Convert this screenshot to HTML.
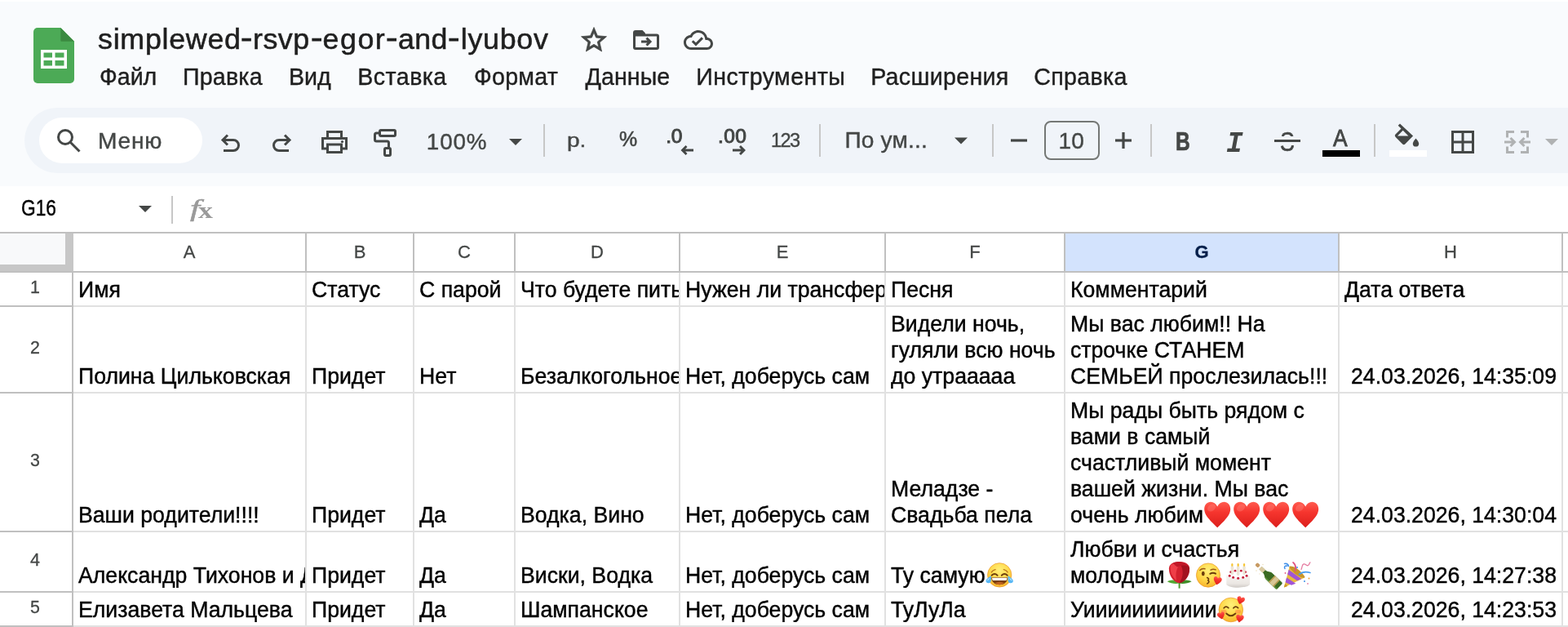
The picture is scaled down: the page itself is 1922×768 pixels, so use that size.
<!DOCTYPE html>
<html lang="ru">
<head>
<meta charset="utf-8">
<title>simplewed-rsvp-egor-and-lyubov</title>
<style>
html,body{margin:0;padding:0;overflow:hidden}
body{width:1922px;height:768px;overflow:hidden;position:relative;background:#fff;font-family:"Liberation Sans",sans-serif;-webkit-font-smoothing:antialiased}
.app{position:absolute;left:0;top:0;width:1922px;height:768px;overflow:hidden;will-change:transform}
.top{position:absolute;left:0;top:2px;width:1922px;height:226px;background:#f9fbfd}
.pill{position:absolute;left:30px;top:132px;width:1960px;height:80px;border-radius:40px;background:#f0f4f9}
.search{position:absolute;left:48px;top:144px;width:200px;height:56px;border-radius:28px;background:#fff}
.fsize{position:absolute;left:1280px;top:148px;width:64px;height:44px;border:2px solid #747775;border-radius:8px}
.ico{position:absolute;left:0;top:0}
.sgap{position:absolute;left:1565px;top:167px;width:26px;height:10.600px;background:#f0f4f9}
.sbar{position:absolute;left:1562px;top:170.600px;width:32px;height:3.400px;background:#444746}
.titlebox{position:absolute;white-space:nowrap;color:#1f1f1f;-webkit-text-stroke:.55px #1f1f1f}
.titlebox .hy{display:inline-block;position:relative;top:-2.500px;transform-origin:0 50%;-webkit-text-stroke-width:.9px}
.t{position:absolute;white-space:pre;-webkit-text-stroke:.4px currentColor}
.fx{position:absolute;left:0;top:0;font-family:"Liberation Serif",serif;color:#9a9a9a;white-space:nowrap}
.fx span{display:inline-block;position:relative;line-height:40px;transform-origin:0 0;vertical-align:top}
.fx .f{left:233px;top:235px;font-size:30px;font-style:italic;transform:scaleX(1.45);-webkit-text-stroke:.5px #9a9a9a}
.fx .fxx{left:234.660px;top:238px;font-size:27.500px;font-weight:700;transform:scaleX(1.3)}
.grid{position:absolute;left:0;top:0;width:1922px;height:768px}
.hdr-bg{position:absolute;left:0;top:286px;width:1922px;height:46px;background:#fff}
.corner{position:absolute;left:0;top:286px;width:80px;height:38px;background:#f8f9fa}
.corner-r{position:absolute;left:80px;top:286px;width:10px;height:48px;background:#c7c7c7}
.corner-b{position:absolute;left:0;top:324px;width:90px;height:10px;background:#c7c7c7}
.sel{position:absolute;background:#d3e3fd}
.vl{position:absolute;top:334px;width:2px;height:434px;background:#e1e1e1}
.hl{position:absolute;left:90px;width:1832px;height:2px;background:#e1e1e1}
.hline{position:absolute;height:2px;background:#c0c0c0}
.hv{position:absolute;top:286px;width:2px;height:46px;background:#c0c0c0}
.rv{position:absolute;left:88px;top:334px;width:2px;height:434px;background:#c0c0c0}
.rh{position:absolute;left:0;width:88px;height:2px;background:#c0c0c0}
.ch{position:absolute;top:286px;height:46px;line-height:46px;text-align:center;font-size:22px;color:#444746;-webkit-text-stroke:.3px currentColor}
.sel-l{font-weight:700;color:#041e49}
.rn{position:absolute;left:0;width:86px;text-align:center;font-size:21.400px;color:#444746;-webkit-text-stroke:.3px currentColor}
.c{position:absolute;overflow:hidden;font-size:26.667px;line-height:32px;color:#000;white-space:nowrap;-webkit-text-stroke:.42px #000}
.c .x{position:absolute;left:6px;bottom:3px;line-height:31px;transform:scaleY(1.03226);transform-origin:0 100%}
.c.r .x{left:auto;right:6px}
.e{display:inline-block;position:relative;width:36px;height:0;vertical-align:baseline}
.e svg{position:absolute;left:0;top:-25px;height:34.875px}
</style>
</head>
<body>
<div class="app">
<div class="top"></div>
<div class="pill"></div>
<div class="search"></div>
<div class="fsize"></div>

<svg class="ico" width="1922" height="230" viewBox="0 0 1922 230" aria-hidden="true">
 <defs>
  <linearGradient id="gh" x1="0" y1="0" x2="0" y2="1"><stop offset="0" stop-color="#ff5c50"/><stop offset=".4" stop-color="#f6352e"/><stop offset="1" stop-color="#dc1f1c"/></linearGradient>
  <radialGradient id="gf" cx=".5" cy=".3" r=".8"><stop offset="0" stop-color="#fff07a"/><stop offset=".5" stop-color="#ffd84a"/><stop offset=".85" stop-color="#f9b72e"/><stop offset="1" stop-color="#ef9a22"/></radialGradient>
  <linearGradient id="gc" x1="0" y1="0" x2="0" y2="1"><stop offset="0" stop-color="#f7f4f1"/><stop offset=".7" stop-color="#ebe7e3"/><stop offset="1" stop-color="#cfcac6"/></linearGradient>
 </defs>
 <!-- sheets logo -->
 <path d="M46 34h28.300L91 50.700V97a5 5 0 0 1-5 5H46a5 5 0 0 1-5-5V39a5 5 0 0 1 5-5z" fill="#4caa56"/>
 <path d="M74.300 34L91 50.700H75.300a1 1 0 0 1-1-1z" fill="#3b8a40"/>
 <path d="M50 61h32v23H50zM53.500 64.500v6H64v-6zM67.500 64.500v6H78.500v-6zM53.500 74v6.500H64V74zM67.500 74v6.500H78.500V74z" fill="#fff" fill-rule="evenodd"/>
 <!-- star -->
 <path transform="translate(709.4 30.4) scale(1.55)" d="M22 9.240l-7.190-.620L12 2 9.190 8.630 2 9.240l5.460 4.730L5.820 21 12 17.270 18.180 21l-1.630-7.030L22 9.240zM12 15.400l-3.760 2.270 1-4.280-3.320-2.880 4.380-.380L12 6.100l1.710 4.040 4.380.380-3.320 2.880 1 4.280L12 15.400z" fill="#444746" stroke="#444746" stroke-width=".5"/>
 <!-- move to folder -->
 <path d="M777.500 41.500v16.500a1.500 1.500 0 0 0 1.500 1.500h26a1.500 1.500 0 0 0 1.500-1.500V44.500a1.500 1.500 0 0 0-1.500-1.500H777.500" fill="none" stroke="#444746" stroke-width="3"/>
 <path d="M776 43v-3a3 3 0 0 1 3-3h8.500l3.500 3.500V43z" fill="#444746"/>
 <path d="M786 51h10M792.500 46.500l4.500 4.500-4.500 4.500" fill="none" stroke="#444746" stroke-width="3"/>
 <!-- cloud done -->
 <path transform="translate(838 31) scale(1.5)" d="M19.350 10.040C18.670 6.590 15.640 4 12 4 9.110 4 6.600 5.640 5.350 8.040 2.340 8.360 0 10.910 0 14c0 3.310 2.690 6 6 6h13c2.760 0 5-2.240 5-5 0-2.640-2.050-4.780-4.650-4.960zM19 18H6c-2.210 0-4-1.790-4-4 0-2.050 1.530-3.760 3.560-3.970l1.070-.110.500-.950C8.080 7.140 9.940 6 12 6c2.620 0 4.880 1.860 5.390 4.430l.300 1.500 1.530.110c1.560.100 2.780 1.410 2.780 2.960 0 1.650-1.350 3-3 3zm-9-3.820l-2.090-2.090L6.500 13.500 10 17l6.010-6.010-1.410-1.410z" fill="#444746"/>
 <!-- toolbar pill -->
</svg>

<svg class="ico" style="top:0" width="1922" height="284" viewBox="0 0 1922 284" aria-hidden="true">
 <g fill="none" stroke="#444746" stroke-width="3">
  <!-- search -->
  <circle cx="80" cy="168" r="8.500"/><path d="M86 174l11.500 11.500"/>
  <!-- undo -->
  <path d="M274 184.500h12a6.500 6.500 0 0 0 0-13h-13"/><path d="M279 177.500l-6-6 6-6"/>
  <!-- redo -->
  <path d="M354 184.500h-12a6.500 6.500 0 0 1 0-13h13"/><path d="M349 177.500l6-6-6-6"/>
  <!-- print -->
  <path d="M401.500 169.500v-8h17v8"/><path d="M401.500 182h-6v-12.500h29V182h-6"/><path d="M401.500 177h17v9.500h-17z"/>
  <!-- paint format -->
  <rect x="465.500" y="159.500" width="19" height="7" rx="1.500"/><path d="M465.500 163h-4a2 2 0 0 0-2 2v6a2 2 0 0 0 2 2h13a2 2 0 0 1 2 2v6"/><rect x="471.500" y="181.500" width="7" height="9" rx="1.500"/>
  <!-- borders -->
  <path d="M1780.500 161.500h25v25h-25zM1793 161.500v25M1780.500 174h25"/>
 </g>
 <circle cx="419.500" cy="173.500" r="1.600" fill="#444746"/>
 <g fill="#444746">
  <path d="M624 170h16l-8 8z"/><path d="M1170 168.500h16l-8 8z"/><path d="M170 252h16l-8 8z"/>
  <!-- minus / plus -->
  <rect x="1239" y="170.400" width="20" height="3.200"/><rect x="1367" y="170.400" width="20" height="3.200"/><rect x="1375.400" y="162" width="3.200" height="20"/>
  <!-- dec arrows -->
  <path d="M834.500 184l6-6 2 2-2.500 2.500h10v3h-10l2.500 2.500-2 2z"/>
  <path d="M914 184l-6-6-2 2 2.500 2.500h-10.500v3h10.500l-2.500 2.500 2 2z"/>
  <!-- fill bucket -->
  <path d="M1716 151.500l-2.300 2.300 3.800 3.800-7 7a2.200 2.200 0 0 0 0 3.100l8.700 8.700a2.200 2.200 0 0 0 3.100 0l9.800-9.800zm3.700 8.300l6.700 6.700h-13.400z"/>
  <path d="M1735.500 169.500s-3.700 4-3.700 6.400a3.700 3.700 0 0 0 7.400 0c0-2.400-3.700-6.400-3.700-6.400z"/>
 </g>
 <rect x="1621" y="184" width="46" height="8" fill="#000"/>
 <rect x="1703" y="184" width="46" height="8" fill="#fff"/>
 <!-- merge (disabled) -->
 <g fill="none" stroke="#b0b2b3" stroke-width="3">
  <path d="M1856 161.500h-8.500v7M1847.500 179.500v7h8.500M1864 161.500h8.500v7M1872.500 179.500v7h-8.500"/>
  <path d="M1844 174h12M1851.500 169l5 5-5 5M1876 174h-12M1868.500 169l-5 5 5 5"/>
 </g>
 <path d="M1894 170h16l-8 8z" fill="#b0b2b3"/>
 <!-- separators -->
 <g fill="#c7c7c7"><rect x="666" y="152" width="2" height="40"/><rect x="1004" y="152" width="2" height="40"/><rect x="1216" y="152" width="2" height="40"/><rect x="1410" y="152" width="2" height="40"/><rect x="1684" y="152" width="2" height="40"/><rect x="210" y="240" width="2" height="34"/></g>
</svg>
<div class="titlebox" style="left:119.60px;top:27.29px;font-size:35.8px;line-height:43px"><span style="margin-left:0.43px;letter-spacing:0.735px;">simplewed</span><span class="hy" style="margin-left:-0.97px;transform:scaleX(1.189);">-</span><span style="margin-left:3.26px;letter-spacing:0.523px;">rsvp</span><span class="hy" style="margin-left:1.73px;transform:scaleX(1.204);">-</span><span style="margin-left:2.31px;letter-spacing:1.496px;">egor</span><span class="hy" style="margin-left:0.03px;transform:scaleX(1.204);">-</span><span style="margin-left:2.71px;letter-spacing:0.452px;">and</span><span class="hy" style="margin-left:0.43px;transform:scaleX(1.204);">-</span><span style="margin-left:3.40px;letter-spacing:0.716px;">lyubov</span></div>
<div class="menubar"><span class="t menu" style="left:122.00px;top:76.58px;font-size:28.6px;line-height:34px;color:#1f1f1f;">Файл</span><span class="t menu" style="left:224.04px;top:76.58px;font-size:28.6px;line-height:34px;color:#1f1f1f;letter-spacing:0.192px;">Правка</span><span class="t menu" style="left:354.00px;top:76.58px;font-size:28.6px;line-height:34px;color:#1f1f1f;">Вид</span><span class="t menu" style="left:438.35px;top:76.58px;font-size:28.6px;line-height:34px;color:#1f1f1f;letter-spacing:0.434px;">Вставка</span><span class="t menu" style="left:581.00px;top:76.58px;font-size:28.6px;line-height:34px;color:#1f1f1f;letter-spacing:0.263px;">Формат</span><span class="t menu" style="left:717.50px;top:76.58px;font-size:28.6px;line-height:34px;color:#1f1f1f;letter-spacing:0.073px;">Данные</span><span class="t menu" style="left:853.35px;top:76.58px;font-size:28.6px;line-height:34px;color:#1f1f1f;letter-spacing:0.413px;">Инструменты</span><span class="t menu" style="left:1067.17px;top:76.58px;font-size:28.6px;line-height:34px;color:#1f1f1f;letter-spacing:0.314px;">Расширения</span><span class="t menu" style="left:1267.36px;top:76.58px;font-size:28.6px;line-height:34px;color:#1f1f1f;letter-spacing:0.306px;">Справка</span></div>
<span class="t" style="left:120.00px;top:155.22px;font-size:28.2px;line-height:34px;color:#444746;letter-spacing:0.754px;">Меню</span><span class="t" style="left:522.78px;top:157.36px;font-size:27.8px;line-height:33px;color:#444746;letter-spacing:0.909px;">100%</span><span class="t sx" style="left:694.72px;top:157.31px;font-size:24.2px;line-height:29px;color:#444746;transform:scaleX(1.159);transform-origin:0 0;">р.</span><span class="t" style="left:758.79px;top:155.49px;font-size:26px;line-height:31px;color:#444746;transform:scaleX(0.959);transform-origin:0 0;-webkit-text-stroke-width:.6px;">%</span><span class="t" style="left:816.26px;top:152.47px;font-size:24.6px;line-height:30px;color:#444746;letter-spacing:-0.264px;-webkit-text-stroke-width:1px;">.0</span><span class="t" style="left:880.00px;top:152.47px;font-size:24.6px;line-height:30px;color:#444746;letter-spacing:0.362px;-webkit-text-stroke-width:1px;">.00</span><span class="t" style="left:945.00px;top:157.82px;font-size:23.6px;line-height:28px;color:#444746;letter-spacing:-1.601px;">123</span><span class="t" style="left:1035.50px;top:155.26px;font-size:28.1px;line-height:34px;color:#444746;letter-spacing:0.160px;">По ум...</span><span class="t" style="left:1297.47px;top:155.54px;font-size:28px;line-height:34px;color:#444746;letter-spacing:0.118px;">10</span><span class="t" style="left:1441.32px;top:154.50px;font-size:31px;line-height:37px;color:#444746;font-weight:700;transform:scaleX(0.793);transform-origin:0 0;-webkit-text-stroke-width:.7px;">B</span><span class="t" style="left:1503.26px;top:155.31px;font-size:36.4px;line-height:44px;color:#444746;font-weight:700;font-style:italic;font-family:'Liberation Mono',monospace;transform:scaleX(0.943);transform-origin:0 0;-webkit-text-stroke-width:0;">I</span><span class="t" style="left:1569.41px;top:153.45px;font-size:33.9px;line-height:41px;color:#444746;transform:scaleX(0.788);transform-origin:0 0;-webkit-text-stroke-width:.7px;">S</span><span class="t" style="left:1633.82px;top:152.08px;font-size:28.6px;line-height:34px;color:#444746;transform:scaleX(0.925);transform-origin:0 0;-webkit-text-stroke-width:.8px;">A</span><span class="t sx" style="left:25.85px;top:237.93px;font-size:27.6px;line-height:33px;color:#000;transform:scaleX(0.823);transform-origin:0 0;-webkit-text-stroke-width:.45px;">G16</span>
<div class="sgap"></div><div class="sbar"></div>
<div class="fx"><span class="f">f</span><span class="fxx">x</span></div>
<div class="grid">
<div class="hdr-bg"></div>
<div class="corner"></div><div class="corner-r"></div><div class="corner-b"></div>
<div class="sel" style="left:1306px;top:286px;width:334px;height:46px"></div>
<div class="vl" style="left:374px"></div>
<div class="vl" style="left:506px"></div>
<div class="vl" style="left:630px"></div>
<div class="vl" style="left:832px"></div>
<div class="vl" style="left:1084px"></div>
<div class="vl" style="left:1304px"></div>
<div class="vl" style="left:1640px"></div>
<div class="vl" style="left:1914px"></div>
<div class="hl" style="top:374px"></div>
<div class="hl" style="top:480px"></div>
<div class="hl" style="top:650px"></div>
<div class="hl" style="top:724px"></div>
<div class="hl" style="top:766px"></div>
<div class="hline" style="top:284px;left:0;width:1922px"></div>
<div class="hline" style="top:332px;left:0;width:1922px"></div>
<div class="hv" style="left:374px"></div>
<div class="hv" style="left:506px"></div>
<div class="hv" style="left:630px"></div>
<div class="hv" style="left:832px"></div>
<div class="hv" style="left:1084px"></div>
<div class="hv" style="left:1304px"></div>
<div class="hv" style="left:1640px"></div>
<div class="hv" style="left:1914px"></div>
<div class="rv"></div>
<div class="rh" style="top:374px"></div>
<div class="rh" style="top:480px"></div>
<div class="rh" style="top:650px"></div>
<div class="rh" style="top:724px"></div>
<div class="rh" style="top:766px"></div>
<div class="ch" style="left:90px;width:284px">A</div>
<div class="ch" style="left:376px;width:130px">B</div>
<div class="ch" style="left:508px;width:122px">C</div>
<div class="ch" style="left:632px;width:200px">D</div>
<div class="ch" style="left:834px;width:250px">E</div>
<div class="ch" style="left:1086px;width:218px">F</div>
<div class="ch sel-l" style="left:1306px;width:334px">G</div>
<div class="ch" style="left:1642px;width:272px">H</div>
<div class="rn" style="top:334px;height:40px;line-height:37px">1</div>
<div class="rn" style="top:376px;height:104px;line-height:101px">2</div>
<div class="rn" style="top:482px;height:168px;line-height:165px">3</div>
<div class="rn" style="top:652px;height:72px;line-height:69px">4</div>
<div class="rn" style="top:726px;height:40px;line-height:37px">5</div>
<div class="c" style="left:90px;top:334px;width:284px;height:40px"><div class="x">Имя</div></div>
<div class="c" style="left:376px;top:334px;width:130px;height:40px"><div class="x">Статус</div></div>
<div class="c" style="left:508px;top:334px;width:122px;height:40px"><div class="x">С парой</div></div>
<div class="c" style="left:632px;top:334px;width:200px;height:40px"><div class="x">Что будете пить</div></div>
<div class="c" style="left:834px;top:334px;width:250px;height:40px"><div class="x">Нужен ли трансфер</div></div>
<div class="c" style="left:1086px;top:334px;width:218px;height:40px"><div class="x">Песня</div></div>
<div class="c" style="left:1306px;top:334px;width:334px;height:40px"><div class="x">Комментарий</div></div>
<div class="c" style="left:1642px;top:334px;width:272px;height:40px"><div class="x">Дата ответа</div></div>
<div class="c" style="left:90px;top:376px;width:284px;height:104px"><div class="x">Полина Цильковская</div></div>
<div class="c" style="left:376px;top:376px;width:130px;height:104px"><div class="x">Придет</div></div>
<div class="c" style="left:508px;top:376px;width:122px;height:104px"><div class="x">Нет</div></div>
<div class="c" style="left:632px;top:376px;width:200px;height:104px"><div class="x">Безалкогольное</div></div>
<div class="c" style="left:834px;top:376px;width:250px;height:104px"><div class="x">Нет, доберусь сам</div></div>
<div class="c" style="left:1086px;top:376px;width:218px;height:104px"><div class="x">Видели ночь,<br>гуляли всю ночь<br>до утрааааа</div></div>
<div class="c" style="left:1306px;top:376px;width:334px;height:104px"><div class="x">Мы вас любим!! На<br>строчке СТАНЕМ<br>СЕМЬЕЙ прослезилась!!!</div></div>
<div class="c r" style="left:1642px;top:376px;width:272px;height:104px"><div class="x">24.03.2026, 14:35:09</div></div>
<div class="c" style="left:90px;top:482px;width:284px;height:168px"><div class="x">Ваши родители!!!!</div></div>
<div class="c" style="left:376px;top:482px;width:130px;height:168px"><div class="x">Придет</div></div>
<div class="c" style="left:508px;top:482px;width:122px;height:168px"><div class="x">Да</div></div>
<div class="c" style="left:632px;top:482px;width:200px;height:168px"><div class="x">Водка, Вино</div></div>
<div class="c" style="left:834px;top:482px;width:250px;height:168px"><div class="x">Нет, доберусь сам</div></div>
<div class="c" style="left:1086px;top:482px;width:218px;height:168px"><div class="x">Меладзе -<br>Свадьба пела</div></div>
<div class="c" style="left:1306px;top:482px;width:334px;height:168px"><div class="x">Мы рады быть рядом с<br>вами в самый<br>счастливый момент<br>вашей жизни. Мы вас<br>очень любим<span class="e"><svg viewBox="0 0 36 36" width="36" height="36" preserveAspectRatio="none" role="img" aria-label="❤️"><path transform="translate(1.2 .8)" d="M16 5.700C14.300 2.100 11.200 0 7.900 0 3.300 0 0 3.800 0 8.700c0 7.300 6.500 13.600 16 22.800 9.500-9.200 16-15.500 16-22.800C32 3.800 28.700 0 24.100 0c-3.300 0-6.400 2.100-8.100 5.700z" fill="url(#gh)"/><ellipse cx="10" cy="8" rx="5.500" ry="4" transform="rotate(-35 10 8)" fill="#ff8a80" opacity=".35"/></svg></span><span class="e"><svg viewBox="0 0 36 36" width="36" height="36" preserveAspectRatio="none" role="img" aria-label="❤️"><path transform="translate(1.2 .8)" d="M16 5.700C14.300 2.100 11.200 0 7.900 0 3.300 0 0 3.800 0 8.700c0 7.300 6.500 13.600 16 22.800 9.500-9.200 16-15.500 16-22.800C32 3.800 28.700 0 24.100 0c-3.300 0-6.400 2.100-8.100 5.700z" fill="url(#gh)"/><ellipse cx="10" cy="8" rx="5.500" ry="4" transform="rotate(-35 10 8)" fill="#ff8a80" opacity=".35"/></svg></span><span class="e"><svg viewBox="0 0 36 36" width="36" height="36" preserveAspectRatio="none" role="img" aria-label="❤️"><path transform="translate(1.2 .8)" d="M16 5.700C14.300 2.100 11.200 0 7.900 0 3.300 0 0 3.800 0 8.700c0 7.300 6.500 13.600 16 22.800 9.500-9.200 16-15.500 16-22.800C32 3.800 28.700 0 24.100 0c-3.300 0-6.400 2.100-8.100 5.700z" fill="url(#gh)"/><ellipse cx="10" cy="8" rx="5.500" ry="4" transform="rotate(-35 10 8)" fill="#ff8a80" opacity=".35"/></svg></span><span class="e"><svg viewBox="0 0 36 36" width="36" height="36" preserveAspectRatio="none" role="img" aria-label="❤️"><path transform="translate(1.2 .8)" d="M16 5.700C14.300 2.100 11.200 0 7.900 0 3.300 0 0 3.800 0 8.700c0 7.300 6.500 13.600 16 22.800 9.500-9.200 16-15.500 16-22.800C32 3.800 28.700 0 24.100 0c-3.300 0-6.400 2.100-8.100 5.700z" fill="url(#gh)"/><ellipse cx="10" cy="8" rx="5.500" ry="4" transform="rotate(-35 10 8)" fill="#ff8a80" opacity=".35"/></svg></span></div></div>
<div class="c r" style="left:1642px;top:482px;width:272px;height:168px"><div class="x">24.03.2026, 14:30:04</div></div>
<div class="c" style="left:90px;top:652px;width:284px;height:72px"><div class="x">Александр Тихонов и Д</div></div>
<div class="c" style="left:376px;top:652px;width:130px;height:72px"><div class="x">Придет</div></div>
<div class="c" style="left:508px;top:652px;width:122px;height:72px"><div class="x">Да</div></div>
<div class="c" style="left:632px;top:652px;width:200px;height:72px"><div class="x">Виски, Водка</div></div>
<div class="c" style="left:834px;top:652px;width:250px;height:72px"><div class="x">Нет, доберусь сам</div></div>
<div class="c" style="left:1086px;top:652px;width:218px;height:72px"><div class="x">Ту самую<span class="e"><svg viewBox="0 0 36 36" width="36" height="36" preserveAspectRatio="none" role="img" aria-label="😂"><circle cx="17.2" cy="16.4" r="14.7" fill="url(#gf)" stroke="#e9962a" stroke-width=".7"/><path d="M7.600 16.800q3.500-3.400 7 0M19.800 16.800q3.500-3.400 7 0" stroke="#6b3d0c" stroke-width="1.900" fill="none" stroke-linecap="round"/><path d="M7.300 13q1.700-2.700 4.800-3.300M27.100 13q-1.700-2.700-4.800-3.300" stroke="#b5721c" stroke-width="1.300" fill="none" stroke-linecap="round"/><path d="M7.200 19.300h20c0 5.600-4.300 9-10 9s-10-3.400-10-9z" fill="#7a3f0d"/><path d="M8 19.700h18.400c0 1.400-.4 2.500-1 3.300H9c-.6-.8-1-1.900-1-3.300z" fill="#fff"/><path d="M11.500 26.400q5.700-3 11.400 0-2.400 1.900-5.700 1.900t-5.700-1.900z" fill="#c0621f"/><path d="M6.900 17.400c-3.200 1.900-6.400 4.400-6.400 6.400 0 1.500 1.300 2.500 3.100 2.500 2.200 0 3.300-1.500 3.300-4z" fill="#57b6f5"/><path d="M27.500 17.400c3.200 1.900 6.400 4.400 6.400 6.400 0 1.500-1.300 2.500-3.100 2.500-2.200 0-3.300-1.500-3.300-4z" fill="#57b6f5"/><path d="M5.500 19.500c-1.800 1.300-3.500 2.800-3.900 4.200.8-.3 2.900-1.700 3.900-4.200z" fill="#c8ecff"/><path d="M28.900 19.500c1.800 1.300 3.500 2.800 3.900 4.200-.8-.3-2.900-1.700-3.900-4.200z" fill="#c8ecff"/></svg></span></div></div>
<div class="c" style="left:1306px;top:652px;width:334px;height:72px"><div class="x">Любви и счастья<br>молодым<span class="e"><svg viewBox="0 0 36 36" width="36" height="36" preserveAspectRatio="none" role="img" aria-label="🌹"><path d="M16.600 25.500h2v7.200h-2z" fill="#4a9e2f"/><path d="M17.500 26.600C13 21.300 7 21.700 2.800 24.300 7 26.600 12.500 27.700 17.500 26.600z" fill="#52a834"/><path d="M17.500 26.600C22 21.300 28 21.700 32.600 24.300 28 26.600 22.500 27.700 17.500 26.600z" fill="#3f8e28"/><path d="M4.900 8.500C4.900 3.200 10 0 17.500 0s12.600 3.200 12.600 8.500c0 8.500-5 16.300-12.600 17.900C9.900 24.800 4.900 17 4.900 8.500z" fill="#d3202e"/><path d="M18.500 2.500C25 2.300 30.100 5 30.100 8.500c0 8.500-5 16.300-12.600 17.900 5.200-7.400 5.700-16.400 1-23.900z" fill="#a3121f"/><path d="M7 4.300C10.500 1.700 15 1.600 18.500 2.500 14 8 12.500 15 14 23 8.500 18.500 5.500 11 7 4.300z" fill="#ef3e48"/><path d="M10 1.800c3-1.500 8-2 12-.8 2.500 1 5 2.300 6.300 4.500C24 3.800 19 4.400 15 6.600 12.800 5 11.200 3.400 10 1.800z" fill="#c01828"/></svg></span><span class="e"><svg viewBox="0 0 36 36" width="36" height="36" preserveAspectRatio="none" role="img" aria-label="😘"><circle cx="17" cy="16.6" r="14.6" fill="url(#gf)" stroke="#e9962a" stroke-width=".7"/><path d="M6.800 10.500q2.600-2.600 6.200-1.700" stroke="#9a5a14" stroke-width="1.400" fill="none" stroke-linecap="round"/><ellipse cx="10.800" cy="14.600" rx="1.900" ry="2.700" fill="#6b3d0c"/><path d="M19.300 14.900q3.300-2.100 6.800-.2" stroke="#6b3d0c" stroke-width="1.900" fill="none" stroke-linecap="round"/><path d="M20 10.200q3-1.600 6.200-.3" stroke="#9a5a14" stroke-width="1.400" fill="none" stroke-linecap="round"/><path d="M15.700 19.600q3.100 1.300 1 3.300 2.700 1.900-.9 4" stroke="#6b3d0c" stroke-width="1.700" fill="none" stroke-linecap="round" stroke-linejoin="round"/><path transform="translate(23.30 18.60) scale(0.3125) rotate(12 16 16)" d="M16 5.700C14.300 2.100 11.200 0 7.900 0 3.300 0 0 3.800 0 8.700c0 7.300 6.500 13.600 16 22.800 9.500-9.200 16-15.500 16-22.800C32 3.800 28.700 0 24.100 0c-3.300 0-6.400 2.100-8.100 5.700z" fill="url(#gh)"/></svg></span><span class="e"><svg viewBox="0 0 36 36" width="36" height="36" preserveAspectRatio="none" role="img" aria-label="🎂"><path d="M3.300 16v11.200c0 2.500 6.400 4.500 14.350 4.500S32 29.700 32 27.200V16z" fill="url(#gc)"/><ellipse cx="17.650" cy="16" rx="14.350" ry="4.700" fill="#fff"/><g fill="#c41f3b"><circle cx="7.200" cy="17.400" r="1.500"/><circle cx="11.600" cy="19.300" r="1.500"/><circle cx="17.650" cy="20.200" r="1.500"/><circle cx="23.700" cy="19.300" r="1.500"/><circle cx="28.100" cy="17.400" r="1.500"/><circle cx="8.700" cy="12.700" r="1.400"/><circle cx="14" cy="11.200" r="1.400"/><circle cx="21.300" cy="11.200" r="1.400"/><circle cx="26.600" cy="12.700" r="1.400"/></g><g fill="#f3ead9" stroke="#d5c9b4" stroke-width=".5"><rect x="9.200" y="5.600" width="2.300" height="9.800" rx=".6"/><rect x="16.500" y="5.600" width="2.300" height="10.800" rx=".6"/><rect x="23.900" y="5.600" width="2.300" height="9.800" rx=".6"/></g><g fill="#f7c531"><ellipse cx="10.350" cy="4" rx="1.200" ry="1.900"/><ellipse cx="17.650" cy="4" rx="1.200" ry="1.900"/><ellipse cx="25.050" cy="4" rx="1.200" ry="1.900"/></g></svg></span><span class="e"><svg viewBox="0 0 36 36" width="36" height="36" preserveAspectRatio="none" role="img" aria-label="🍾"><g transform="translate(29.300 27.200) rotate(-46)"><path d="M-5.500 3V-13c0-4 3.300-5 3.300-9v-6h4.400v6c0 4 3.300 5 3.300 9V3c0 .8-.7 1.500-1.500 1.500h-8c-.8 0-1.500-.7-1.500-1.500z" fill="#3a6a22"/><path d="M-5.500 3V-13c0-2 .8-3.200 1.600-4.500V4.500c-.9 0-1.600-.7-1.600-1.500z" fill="#5c8f38"/><rect x="-5.500" y="-9" width="11" height="8.500" fill="#d8c696"/><rect x="-5.500" y="-9" width="11" height="1.500" fill="#b79a4e"/><rect x="-5.500" y="-2" width="11" height="1.500" fill="#b79a4e"/><rect x="-2.500" y="-28.500" width="5" height="6.500" rx=".8" fill="#d9c9a0"/><rect x="-2.300" y="-35.500" width="4.600" height="5" rx="1.500" fill="#c79a63"/></g><g fill="#e8d9b0"><circle cx="4" cy="11" r=".7"/><circle cx="12" cy="3.500" r=".7"/><circle cx="8" cy="15" r=".6"/></g></svg></span><span class="e"><svg viewBox="0 0 36 36" width="36" height="36" preserveAspectRatio="none" role="img" aria-label="🎉"><path d="M1.900 31.500L8.800 5.800 27.100 19.500z" fill="#eabb3e"/><path d="M3.600 25.200l1.500-5.600 11.200 7.200-5.300 1.900z" fill="#a155d6"/><path d="M6.200 15.500l1.500-5.600 15.600 11.400-5.200 1.900z" fill="#a155d6"/><path d="M1.900 31.500l1.200-4.400 3.200 3z" fill="#c9962a"/><path d="M8.800 5.800c3-1 9 2 13.500 6.500s6 7 4.800 7.200c-3 1-9-2-13.500-6.500S7.600 6 8.800 5.800z" fill="#c8952a"/><path d="M3 8.500c-1.500-2 .5-4 2.500-3.300M2.500 2.500c2.500-.5 4.500 1 5 3" stroke="#3f8fe8" stroke-width="1.500" fill="none" stroke-linecap="round"/><path d="M13 1c3 2.500 4 6 2.500 10.500" stroke="#e0507e" stroke-width="1.700" fill="none" stroke-linecap="round"/><path d="M20.500 15.500c3.500-3 8.500-3.500 13.500-2" stroke="#4a9df0" stroke-width="1.700" fill="none" stroke-linecap="round"/><path d="M23 9.500c1.500-3 .5-5.500 3-6.500s3 3 5.500 1.500 1-3.500 2.500-3.500" stroke="#e57ba0" stroke-width="1.300" fill="none" stroke-linecap="round"/><circle cx="18" cy="7" r="1" fill="#3f8fe8"/><circle cx="27" cy="24" r="1" fill="#3f8fe8"/><circle cx="32.500" cy="20.500" r="1" fill="#f0a030"/><circle cx="31" cy="27" r=".9" fill="#e57ba0"/><circle cx="3.500" cy="14" r=".9" fill="#e0507e"/></svg></span></div></div>
<div class="c r" style="left:1642px;top:652px;width:272px;height:72px"><div class="x">24.03.2026, 14:27:38</div></div>
<div class="c" style="left:90px;top:726px;width:284px;height:40px"><div class="x">Елизавета Мальцева</div></div>
<div class="c" style="left:376px;top:726px;width:130px;height:40px"><div class="x">Придет</div></div>
<div class="c" style="left:508px;top:726px;width:122px;height:40px"><div class="x">Да</div></div>
<div class="c" style="left:632px;top:726px;width:200px;height:40px"><div class="x">Шампанское</div></div>
<div class="c" style="left:834px;top:726px;width:250px;height:40px"><div class="x">Нет, доберусь сам</div></div>
<div class="c" style="left:1086px;top:726px;width:218px;height:40px"><div class="x">ТуЛуЛа</div></div>
<div class="c" style="left:1306px;top:726px;width:334px;height:40px"><div class="x">Уиииииииииии<span class="e"><svg viewBox="0 0 36 36" width="36" height="36" preserveAspectRatio="none" role="img" aria-label="🥰"><circle cx="16.8" cy="17" r="14.8" fill="url(#gf)" stroke="#e9962a" stroke-width=".7"/><path d="M8.200 14.800q2.600-3 5.600-.2M20 14.800q2.600-3 5.600-.2" stroke="#6b3d0c" stroke-width="1.800" fill="none" stroke-linecap="round"/><path d="M11.200 21.500q5.600 5.400 11.200 0" stroke="#6b3d0c" stroke-width="1.900" fill="none" stroke-linecap="round"/><ellipse cx="8" cy="19.200" rx="3.600" ry="2.300" fill="#ff7043" opacity=".45"/><ellipse cx="25.600" cy="19.200" rx="3.600" ry="2.300" fill="#ff7043" opacity=".45"/><path transform="translate(23.85 0.85) scale(0.2969) rotate(18 16 16)" d="M16 5.700C14.300 2.100 11.200 0 7.900 0 3.300 0 0 3.800 0 8.700c0 7.300 6.500 13.600 16 22.800 9.500-9.200 16-15.500 16-22.800C32 3.800 28.700 0 24.100 0c-3.300 0-6.400 2.100-8.100 5.700z" fill="url(#gh)"/><path transform="translate(0.40 19.90) scale(0.2812) rotate(-15 16 16)" d="M16 5.700C14.300 2.100 11.200 0 7.900 0 3.300 0 0 3.800 0 8.700c0 7.300 6.500 13.600 16 22.800 9.500-9.200 16-15.500 16-22.800C32 3.800 28.700 0 24.100 0c-3.300 0-6.400 2.100-8.100 5.700z" fill="url(#gh)"/><path transform="translate(22.85 23.15) scale(0.2969) rotate(10 16 16)" d="M16 5.700C14.300 2.100 11.200 0 7.900 0 3.300 0 0 3.800 0 8.700c0 7.300 6.500 13.600 16 22.800 9.500-9.200 16-15.500 16-22.800C32 3.800 28.700 0 24.100 0c-3.300 0-6.400 2.100-8.100 5.700z" fill="url(#gh)"/></svg></span></div></div>
<div class="c r" style="left:1642px;top:726px;width:272px;height:40px"><div class="x">24.03.2026, 14:23:53</div></div>
</div>
</div>
</body>
</html>
